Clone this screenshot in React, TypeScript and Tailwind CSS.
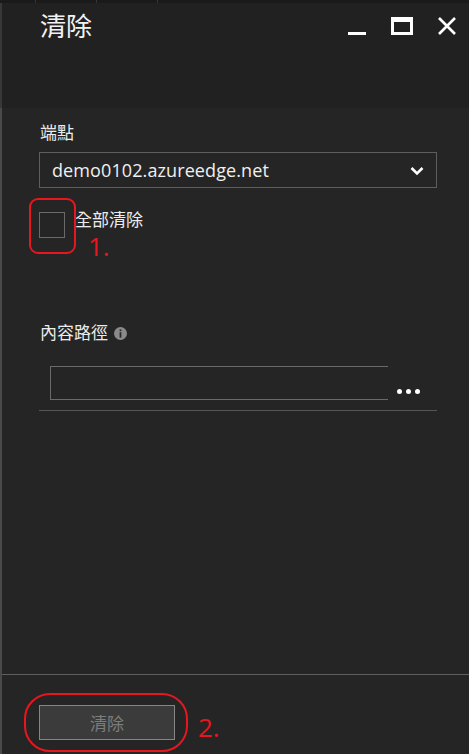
import React from "react";

const cjk = "font-['Noto_Sans_CJK_TC','Noto_Sans_CJK_SC',sans-serif]";

function WindowIcons() {
  return (
    <svg width="120" height="40" viewBox="0 0 120 40" className="shrink-0">
      <rect x="8" y="29" width="18" height="3" fill="#ffffff" />
      <path d="M51 14h22v18H51z M54 19v10h16V19z" fill="#ffffff" fillRule="evenodd" />
      <path d="M99 15L115 31M115 15L99 31" stroke="#ffffff" strokeWidth="2.6" />
    </svg>
  );
}

function Chevron() {
  return (
    <svg width="14" height="10" viewBox="0 0 14 10">
      <path d="M1.5 2L7 7.5L12.5 2" fill="none" stroke="#ffffff" strokeWidth="2.6" />
    </svg>
  );
}

function InfoIcon() {
  return (
    <svg width="13" height="13" viewBox="0 0 13 13">
      <circle cx="6.5" cy="6.5" r="6.5" fill="#8a8a8a" />
      <rect x="5.6" y="2.4" width="1.8" height="1.8" fill="#2a2a2a" />
      <rect x="5.6" y="5.2" width="1.8" height="5.4" fill="#2a2a2a" />
    </svg>
  );
}

export default function App() {
  return (
    <div className={`relative w-[469px] h-[754px] overflow-hidden flex flex-col bg-[#252525] text-[#ececec] ${cjk}`}>
      {/* thin strip of the blade above */}
      <div className="h-[3px] bg-[#1a1a1a] flex">
        <div className="w-[36px] border-r border-[#353535]" />
        <div className="w-[61px] border-r border-[#353535]" />
        <div className="w-[61px] border-r border-[#353535]" />
      </div>

      {/* header */}
      <div className="h-[105px] bg-[#212121] border-l-2 border-[#383838] flex items-start pr-[9px]">
        <div className="pl-[38px] pt-[6px] text-[26px] leading-[32px] text-[#f2f2f2]">清除</div>
        <div className="ml-auto">
          <WindowIcons />
        </div>
      </div>

      {/* body */}
      <div className="flex-1 border-l-2 border-[#4a4a4a] flex flex-col">
        <div className="pl-[37px] pr-[32px] flex flex-col">
          <div className="mt-[14px] pl-[1px] text-[17px] leading-[20px]">端點</div>

          <div className="mt-[10px] h-[36px] border border-[#5e5e5e] flex items-center pl-[12px] pr-[12px]">
            <span className="font-['Open_Sans',sans-serif] text-[18px] leading-[24px] text-[#f0f0f0] tracking-[0.1px]">
              demo0102.azureedge.net
            </span>
            <span className="ml-auto mt-[2px]">
              <Chevron />
            </span>
          </div>

          <div className="mt-[24px] flex items-start">
            <div className="w-[26px] h-[26px] border border-[#6a6a6a]" />
            <span className="ml-[10px] -mt-[2px] text-[17px] leading-[18px]">全部清除</span>
          </div>

          <div className="mt-[84px] pl-[1px] flex items-center gap-[6px]">
            <span className="text-[17px] leading-[20px]">內容路徑</span>
            <span className="mt-[2px]">
              <InfoIcon />
            </span>
          </div>

          <div className="mt-[24px] pl-[11px] flex items-end">
            <div className="w-[338px] h-[34px] border-l border-t border-b border-[#6a6a6a]" />
            <div className="ml-[9px] mb-[6px] flex gap-[4px]">
              <div className="w-[5px] h-[5px] rounded-full bg-white" />
              <div className="w-[5px] h-[5px] rounded-full bg-white" />
              <div className="w-[5px] h-[5px] rounded-full bg-white" />
            </div>
          </div>

          <div className="mt-[10px] h-px bg-[#555555]" />
        </div>

        {/* footer */}
        <div className="mt-auto h-[80px] border-t border-[#5f5f5f] pt-[30px] pl-[37px]">
          <button className="w-[136px] h-[35px] bg-[#3b3b3b] border border-[#858585] text-[17px] text-[#7c7c7c] flex items-center justify-center">
            清除
          </button>
        </div>
      </div>

      {/* red annotations */}
      <div className="absolute left-[29px] top-[198px] w-[47px] h-[56px] border-2 border-[#e8161e] rounded-[9px]" />
      <div className="absolute left-[88px] top-[232px] font-['Open_Sans',sans-serif] text-[26px] leading-[28px] text-[#e8161e]">
        1.
      </div>
      <div className="absolute left-[24px] top-[693px] w-[164px] h-[59px] border-2 border-[#e8161e] rounded-[26px]" />
      <div className="absolute left-[198px] top-[713px] font-['Open_Sans',sans-serif] text-[26px] leading-[28px] text-[#e8161e]">
        2.
      </div>
    </div>
  );
}
